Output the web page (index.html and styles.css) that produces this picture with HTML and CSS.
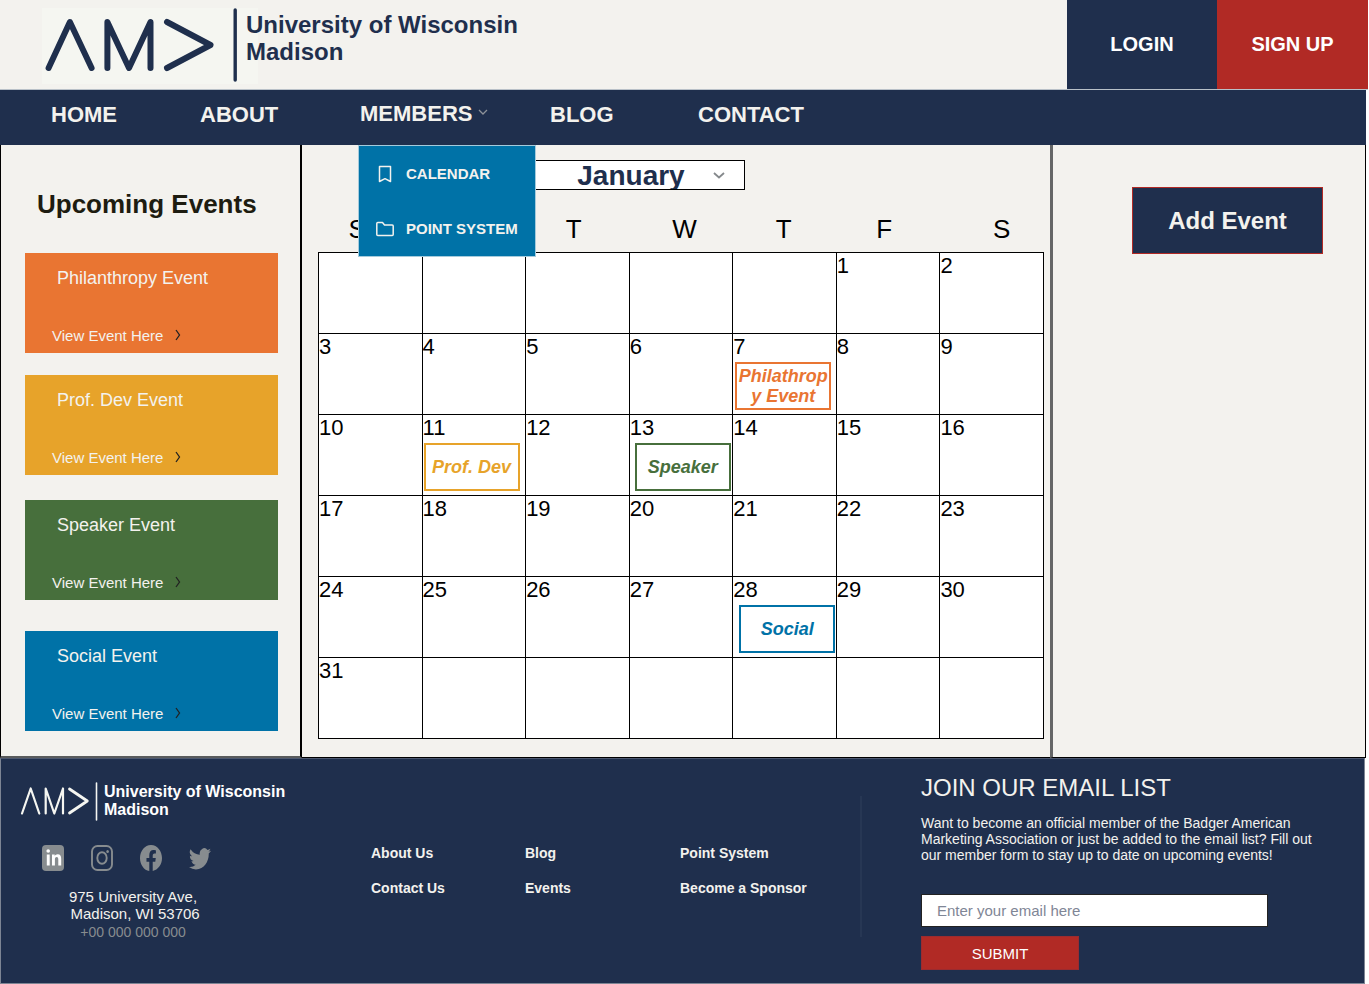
FILE: index.html
```html
<!DOCTYPE html>
<html lang="en">
<head>
<meta charset="utf-8">
<meta name="viewport" content="width=device-width, initial-scale=1">
<title>AMA University of Wisconsin Madison - Calendar</title>
<link rel="stylesheet" href="styles.css">
</head>
<body>
<header class="header">
  <a class="brand" href="#">
    <svg class="brand-logo" viewBox="0 0 216 76" aria-label="AMA">
      <g fill="none" stroke="#1f2f4d" stroke-width="6" stroke-linecap="round" stroke-linejoin="round">
        <path d="M6.600 60 27.900 14 49.600 60"/>
        <path d="M65.400 60V14L87 60 108.500 14V60"/>
        <path d="M125 14 168.500 37 125 60"/>
        <path d="M193.200 2V72" stroke-width="3.400"/>
      </g>
    </svg>
    <span class="brand-name">University of Wisconsin<br>Madison</span>
  </a>
  <div class="account">
    <button class="account-button" type="button">LOGIN</button>
    <button class="account-button signup" type="button">SIGN UP</button>
  </div>
</header>

<nav class="nav">
  <ul class="nav-list">
    <li><a href="#">HOME</a></li>
    <li><a href="#">ABOUT</a></li>
    <li class="nav-members">
      <a href="#">MEMBERS<svg class="nav-chevron" viewBox="0 0 10 6"><path d="M1 1 5 5 9 1" fill="none" stroke="#8d9299" stroke-width="1.300"/></svg></a>
      <ul class="submenu">
        <li><a href="#">
          <svg class="submenu-icon" viewBox="0 0 20 20"><path d="M4.500 2.500h11v15l-5.500-2.800-5.500 2.800z" fill="none" stroke="#f3f2ee" stroke-width="1.500" stroke-linejoin="round"/></svg>
          CALENDAR</a></li>
        <li><a href="#">
          <svg class="submenu-icon" viewBox="0 0 20 20"><path d="M1.800 4.500q0-1 1-1h4.700l2 2.500h7.700q1 0 1 1v8.500q0 1-1 1H2.800q-1 0-1-1z" fill="none" stroke="#f3f2ee" stroke-width="1.500" stroke-linejoin="round"/></svg>
          POINT SYSTEM</a></li>
      </ul>
    </li>
    <li><a href="#">BLOG</a></li>
    <li><a href="#">CONTACT</a></li>
  </ul>
</nav>

<main class="main">
  <section class="upcoming">
    <h2 class="upcoming-title">Upcoming Events</h2>
    <article class="card philanthropy">
      <h3>Philanthropy Event</h3>
      <a href="#">View Event Here<svg class="card-arrow" viewBox="0 0 6 12"><path d="M1 1 4.500 6 1 11" fill="none" stroke="#222" stroke-width="1.300"/></svg></a>
    </article>
    <article class="card profdev">
      <h3>Prof. Dev Event</h3>
      <a href="#">View Event Here<svg class="card-arrow" viewBox="0 0 6 12"><path d="M1 1 4.500 6 1 11" fill="none" stroke="#222" stroke-width="1.300"/></svg></a>
    </article>
    <article class="card speaker">
      <h3>Speaker Event</h3>
      <a href="#">View Event Here<svg class="card-arrow" viewBox="0 0 6 12"><path d="M1 1 4.500 6 1 11" fill="none" stroke="#222" stroke-width="1.300"/></svg></a>
    </article>
    <article class="card social">
      <h3>Social Event</h3>
      <a href="#">View Event Here<svg class="card-arrow" viewBox="0 0 6 12"><path d="M1 1 4.500 6 1 11" fill="none" stroke="#222" stroke-width="1.300"/></svg></a>
    </article>
  </section>

  <section class="calendar">
    <div class="month">
      <select class="month-select" aria-label="Month">
        <option>January</option>
        <option>February</option>
        <option>March</option>
      </select>
      <svg class="month-chevron" viewBox="0 0 12 7"><path d="M1 1 6 5.500 11 1" fill="none" stroke="#85898c" stroke-width="1.800"/></svg>
    </div>
    <table class="days">
      <thead>
        <tr><th>S</th><th aria-label="Monday"></th><th>T</th><th>W</th><th>T</th><th>F</th><th>S</th></tr>
      </thead>
      <tbody>
        <tr><td></td><td></td><td></td><td></td><td></td><td>1</td><td>2</td></tr>
        <tr><td>3</td><td>4</td><td>5</td><td>6</td><td>7<div class="event event-philanthropy">Philathropy Event</div></td><td>8</td><td>9</td></tr>
        <tr><td>10</td><td>11<div class="event event-profdev">Prof. Dev</div></td><td>12</td><td>13<div class="event event-speaker">Speaker</div></td><td>14</td><td>15</td><td>16</td></tr>
        <tr><td>17</td><td>18</td><td>19</td><td>20</td><td>21</td><td>22</td><td>23</td></tr>
        <tr><td>24</td><td>25</td><td>26</td><td>27</td><td>28<div class="event event-social">Social</div></td><td>29</td><td>30</td></tr>
        <tr><td>31</td><td></td><td></td><td></td><td></td><td></td><td></td></tr>
      </tbody>
    </table>
  </section>

  <aside class="actions">
    <button class="add-event" type="button">Add Event</button>
  </aside>
</main>

<footer class="footer">
  <div class="contact">
    <a class="footer-brand" href="#">
      <svg class="footer-logo" viewBox="0 0 80 40" aria-label="AMA">
        <g fill="none" stroke="#f5f6f1" stroke-width="2.200" stroke-linecap="round" stroke-linejoin="round">
          <path d="M2 32.500 10.700 7.500 19.300 32.500"/>
          <path d="M25.700 32.500V7.500L34.300 32.500 43 7.500V32.500"/>
          <path d="M49.500 8 67.300 20 49.500 32" stroke-width="2.800"/>
          <path d="M76.500 2V39" stroke-width="1.600"/>
        </g>
      </svg>
      <span class="footer-brand-name">University of Wisconsin<br>Madison</span>
    </a>
    <div class="socials">
      <a href="#" aria-label="LinkedIn"><svg viewBox="0 0 22 26"><rect width="22" height="26" rx="4" fill="#878c8f"/><circle cx="6.200" cy="6" r="1.800" fill="#fff"/><path d="M4.800 9.500h2.900v11H4.800zM10 9.500h2.700v1.500c.6-1.100 1.500-1.800 3-1.800 2.600 0 3.500 1.900 3.500 4.800v6.500h-2.900v-5.700c0-1.700-.4-2.700-1.600-2.700-1.300 0-1.800 1.100-1.800 2.700v5.700H10z" fill="#fff"/></svg></a>
      <a href="#" aria-label="Instagram"><svg viewBox="0 0 22 26"><g fill="none" stroke="#878c8f" stroke-width="1.900"><rect x="1" y="1" width="20" height="24" rx="5.500"/><ellipse cx="11" cy="13" rx="4.700" ry="5.700"/></g><ellipse cx="16.600" cy="6.400" rx="1.300" ry="1.500" fill="#878c8f"/></svg></a>
      <a href="#" aria-label="Facebook"><svg viewBox="0 0 16 16" preserveAspectRatio="none"><path fill="#878c8f" d="M16 8.049c0-4.446-3.582-8.050-8-8.050C3.580 0-.002 3.603-.002 8.050c0 4.017 2.926 7.347 6.750 7.951v-5.625h-2.030V8.050H6.750V6.275c0-2.017 1.195-3.131 3.022-3.131.876 0 1.791.157 1.791.157v1.980h-1.009c-.993 0-1.303.621-1.303 1.258v1.510h2.218l-.354 2.326H9.250V16c3.824-.604 6.750-3.934 6.750-7.951z"/></svg></a>
      <a href="#" aria-label="Twitter"><svg viewBox="0 0 16 16" preserveAspectRatio="none"><path fill="#878c8f" d="M5.026 15c6.038 0 9.341-5.003 9.341-9.334 0-.14 0-.282-.006-.422A6.685 6.685 0 0 0 16 3.542a6.658 6.658 0 0 1-1.889.518 3.301 3.301 0 0 0 1.447-1.817 6.533 6.533 0 0 1-2.087.793A3.286 3.286 0 0 0 7.875 6.030a9.325 9.325 0 0 1-6.767-3.429 3.289 3.289 0 0 0 1.018 4.382A3.323 3.323 0 0 1 .64 6.575v.045a3.288 3.288 0 0 0 2.632 3.218 3.203 3.203 0 0 1-.865.115 3.230 3.230 0 0 1-.614-.057 3.283 3.283 0 0 0 3.067 2.277A6.588 6.588 0 0 1 .78 13.580a6.320 6.320 0 0 1-.78-.045A9.344 9.344 0 0 0 5.026 15z"/></svg></a>
    </div>
    <address class="address">975 University Ave,<br>&nbsp;Madison, WI 53706<span class="phone">+00 000 000 000</span></address>
  </div>
  <nav class="footer-links" aria-label="Footer">
    <a href="#">About Us</a><a href="#">Blog</a><a href="#">Point System</a>
    <a href="#">Contact Us</a><a href="#">Events</a><a href="#">Become a Sponsor</a>
  </nav>
  <form class="signup-form">
    <h2>JOIN OUR EMAIL LIST</h2>
    <p>Want to become an official member of the Badger American Marketing Association or just be added to the email list? Fill out our member form to stay up to date on upcoming events!</p>
    <input class="email" type="email" placeholder="Enter your email here" aria-label="Email">
    <button class="submit" type="button">SUBMIT</button>
  </form>
</footer>
</body>
</html>
```

FILE: styles.css
```css
:root {
  --navy: #1f2f4d;
  --cream: #f3f2ee;
  --red: #b12a25;
  --blue: #0072a7;
  --orange: #e97532;
  --gold: #e7a32a;
  --green: #476f3c;
}

* {
  box-sizing: border-box;
}

body {
  margin: 0;
  background: #fff;
  font-family: "Liberation Sans", Arial, sans-serif;
}

h2, h3, p, ul {
  margin: 0;
  padding: 0;
}

ul {
  list-style: none;
}

a {
  color: inherit;
  text-decoration: none;
}

svg {
  display: block;
  flex: none;
}

button, input, select {
  font-family: inherit;
  border-radius: 0;
}

/* Header */
.header {
  display: flex;
  justify-content: space-between;
  min-height: 90px;
  margin-right: 1px;
  background: var(--cream);
  border-bottom: 1px solid #b9c1c8;
}

.brand {
  display: flex;
  padding: 8px 0 0 42px;
  color: var(--navy);
}

.brand-logo {
  width: 216px;
  height: 76px;
  margin-right: -12px;
  background: #f5f6f1;
}

.brand-name {
  position: relative;
  padding-top: 3px;
  font-size: 24px;
  font-weight: bold;
  line-height: 27px;
}

.account {
  display: flex;
}

.account-button {
  width: 150px;
  border: 0;
  background: var(--navy);
  color: #fff;
  font-size: 20px;
  font-weight: bold;
}

.signup {
  width: 151px;
  background: var(--red);
}

/* Navigation */
.nav {
  margin-right: 3px;
  background: var(--navy);
  color: var(--cream);
}

.nav-list {
  display: grid;
  grid-template-columns: 149px 160px 190px 148px auto;
  padding-left: 51px;
  font-size: 22px;
  font-weight: bold;
  line-height: 50px;
  min-height: 55px;
}

.nav-members {
  position: relative;
}

.nav-members > a {
  display: flex;
  align-items: center;
  gap: 6px;
  line-height: 48px;
}

.nav-chevron {
  width: 10px;
  height: 6px;
  margin-bottom: 4px;
}

.submenu {
  position: absolute;
  top: 55px;
  left: -2px;
  z-index: 2;
  width: 178px;
  border: 1px solid #a5cbdc;
  background: var(--blue);
  font-size: 15px;
  line-height: 55px;
}

.submenu a {
  display: flex;
  align-items: center;
  gap: 11px;
  padding-left: 16px;
  white-space: nowrap;
}

.submenu-icon {
  width: 20px;
  height: 20px;
}

/* Main area */
.main {
  display: grid;
  grid-template-columns: 302px 1fr 316px;
  margin-right: 3px;
  background: var(--cream);
}

.upcoming {
  padding: 42px 22px 25px 24px;
  border-left: 1px solid #000;
  border-right: 2px solid #000;
  border-bottom: 2px solid #595b5c;
}

.upcoming-title {
  margin: 0 0 32px 12px;
  color: #1d1c10;
  font-size: 26px;
  line-height: 34px;
}

.card {
  display: flex;
  flex-direction: column;
  justify-content: space-between;
  min-height: 100px;
  padding: 14px 27px 8px;
  color: var(--cream);
}

.card h3 {
  padding-left: 5px;
  font-size: 18px;
  font-weight: normal;
  line-height: 22px;
}

.card a {
  display: flex;
  align-items: center;
  gap: 12px;
  font-size: 15px;
  line-height: 18px;
}

.card-arrow {
  width: 6px;
  height: 12px;
  margin-bottom: 2px;
}

.philanthropy {
  background: var(--orange);
}

.profdev {
  margin-top: 22px;
  background: var(--gold);
}

.speaker {
  margin-top: 25px;
  background: var(--green);
}

.social {
  margin-top: 31px;
  background: var(--blue);
}

/* Calendar */
.calendar {
  padding: 15px 6px 17px 16px;
  border-bottom: 1px solid #000;
}

.month {
  position: relative;
  width: 228px;
  margin-left: 199px;
}

.month-select {
  display: block;
  width: 100%;
  height: 30px;
  padding: 0;
  border: 1px solid #000;
  background: #fff;
  color: var(--navy);
  font-size: 28px;
  font-weight: bold;
  line-height: 30px;
  text-align-last: center;
  appearance: none;
}

.month-chevron {
  position: absolute;
  top: 12px;
  right: 20px;
  width: 12px;
  height: 7px;
  pointer-events: none;
}

.days {
  width: 100%;
  border-collapse: collapse;
  table-layout: fixed;
  font-size: 22px;
}

.days th {
  height: 62px;
  padding: 16px 0 0 43px;
  font-size: 26px;
  font-weight: normal;
  line-height: 30px;
  text-align: left;
}

.days th:nth-child(3n) {
  padding-left: 40px;
}

.days th:first-child {
  padding-left: 30px;
}

.days th:last-child {
  padding-left: 53px;
}

.days td {
  height: 81px;
  padding: 0;
  border: 1px solid #000;
  background: #fff;
  line-height: 26px;
  vertical-align: top;
}

.event {
  display: flex;
  align-items: center;
  justify-content: center;
  width: 96px;
  min-height: 48px;
  margin-top: 2px;
  border: 2px solid;
  font-size: 18px;
  font-style: italic;
  font-weight: bold;
  line-height: 20px;
  text-align: center;
  overflow-wrap: anywhere;
}

.event-philanthropy {
  margin-left: 2px;
  color: var(--orange);
}

.event-profdev {
  margin-left: 1px;
  color: var(--gold);
}

.event-speaker {
  margin-left: 5px;
  color: var(--green);
}

.event-social {
  margin-left: 6px;
  color: var(--blue);
}

.actions {
  padding: 42px 42px 0 79px;
  border-left: 3px solid #656667;
  border-right: 1px solid #000;
  border-bottom: 1px solid #000;
}

.add-event {
  width: 100%;
  height: 67px;
  border: 1px solid var(--red);
  background: var(--navy);
  color: var(--cream);
  font-size: 24px;
  font-weight: bold;
}

/* Footer */
.footer {
  display: grid;
  grid-template-columns: 370px 491px 1fr;
  min-height: 226px;
  margin-right: 4px;
  border: 1px solid #7d8594;
  border-top-color: #4c5870;
  background: var(--navy);
  color: var(--cream);
}

.contact {
  padding: 22px 0 0 19px;
}

.footer-brand {
  display: flex;
  gap: 4px;
  color: #fff;
  font-size: 16px;
  font-weight: bold;
  line-height: 18px;
}

.footer-logo {
  width: 80px;
  height: 40px;
}

.footer-brand-name {
  padding-top: 2px;
}

.socials {
  display: flex;
  gap: 27px;
  margin: 24px 0 0 22px;
}

.socials svg {
  width: 22px;
  height: 26px;
}

.address {
  width: 226px;
  margin-top: 17px;
  font-size: 15px;
  font-style: normal;
  line-height: 17px;
  text-align: center;
}

.phone {
  display: block;
  color: #878c8f;
  font-size: 14px;
  line-height: 20px;
}

.footer-links {
  display: grid;
  grid-template-columns: 154px 155px auto;
  align-content: start;
  row-gap: 17px;
  height: 141px;
  margin-top: 37px;
  padding-top: 48px;
  border-right: 2px solid #273754;
  font-size: 14px;
  font-weight: bold;
  line-height: 18px;
}

.signup-form {
  padding: 15px 48px 12px 59px;
}

.signup-form h2 {
  font-size: 24px;
  font-weight: normal;
  line-height: 28px;
}

.signup-form p {
  margin-top: 13px;
  font-size: 14px;
  line-height: 16px;
}

.email {
  display: block;
  width: 347px;
  max-width: 100%;
  height: 33px;
  margin-top: 31px;
  padding: 0 15px;
  border: 1px solid #222;
  background: #fff;
  font-size: 15px;
}

.email::placeholder {
  color: #7f8696;
}

.submit {
  width: 158px;
  height: 34px;
  margin-top: 9px;
  border: 1px solid #9b2b2f;
  background: var(--red);
  color: #fff;
  font-size: 15px;
}
```
